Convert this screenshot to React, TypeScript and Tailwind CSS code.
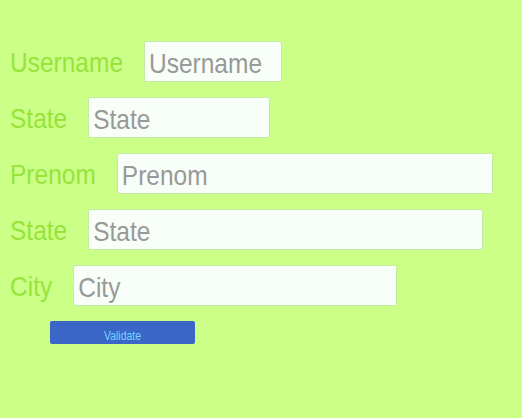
import React from "react";

type Field = {
  label: string;
  width: string;
};

const fields: Field[] = [
  { label: "Username", width: "w-[138px]" },
  { label: "State", width: "w-[182px]" },
  { label: "Prenom", width: "w-[376px]" },
  { label: "State", width: "w-[395px]" },
  { label: "City", width: "w-[324px]" },
];

function FormRow({ field }: { field: Field }) {
  return (
    <div className="flex h-[41px] items-center">
      <label className="mr-[21px] inline-block translate-y-[1.5px] scale-y-[1.15] text-[24.5px] leading-none text-[#97e43a]">
        {field.label}
      </label>
      <div
        className={`${field.width} flex h-full items-center rounded-[2px] border border-[#c6e9a6] bg-[#f8fff8]`}
      >
        <input
          type="text"
          placeholder={field.label}
          className="w-full translate-y-[1.5px] scale-y-[1.15] bg-transparent pl-[4px] text-[24.5px] leading-none text-gray-700 outline-none placeholder:text-[#999999]"
        />
      </div>
    </div>
  );
}

export default function App() {
  return (
    <div className="h-[418px] w-[522px] bg-[#ccff88] pt-[41px] pl-[10px] font-['Liberation_Sans',Arial,sans-serif]">
      <div className="flex flex-col gap-[15px]">
        {fields.map((f, i) => (
          <FormRow key={i} field={f} />
        ))}
      </div>
      <button className="mt-[15px] ml-[40px] h-[23px] w-[145px] rounded-[2px] bg-[#3a66c8] text-[#72d6ff]">
        <span className="inline-block translate-y-[1px] scale-y-[1.2] text-[10.5px]">
          Validate
        </span>
      </button>
    </div>
  );
}
